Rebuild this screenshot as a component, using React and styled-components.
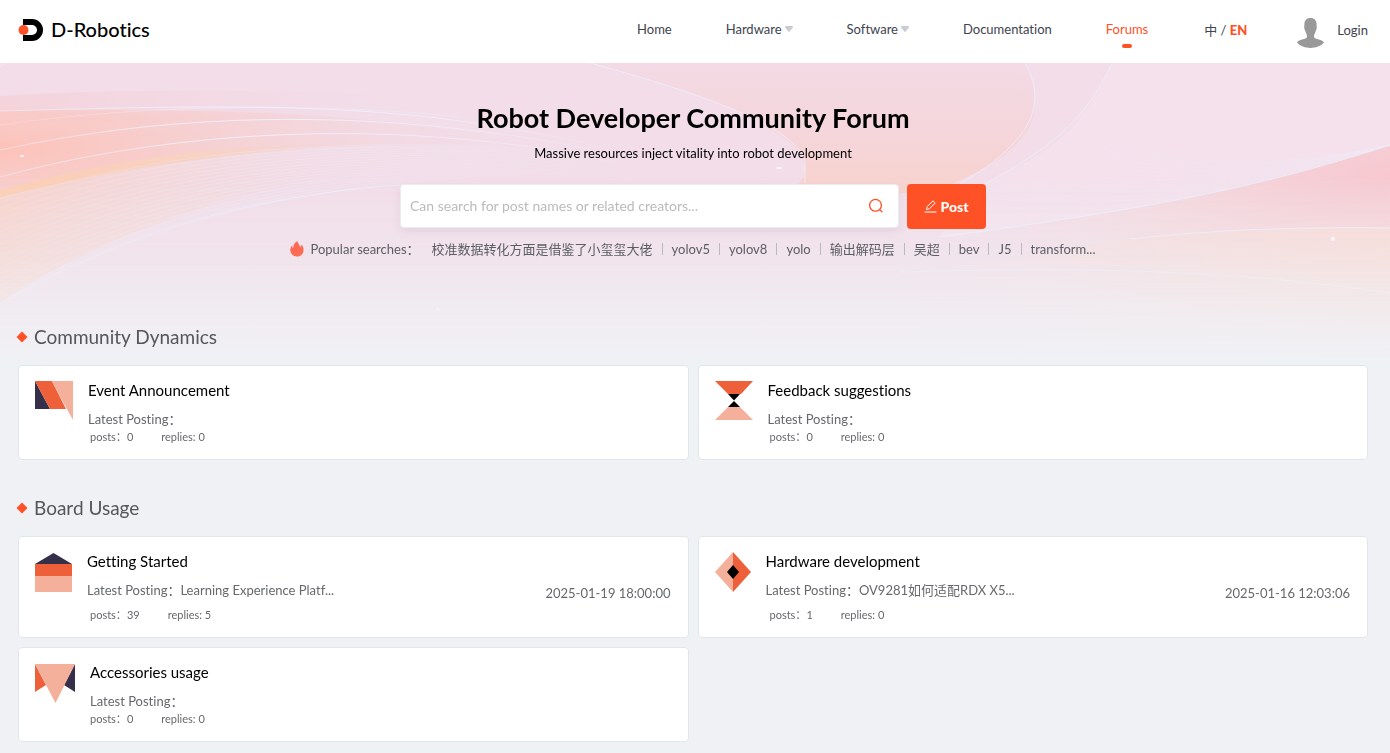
import React from "react";
import styled, { createGlobalStyle } from "styled-components";

const GlobalStyle = createGlobalStyle`
  *, *::before, *::after { box-sizing: border-box; }
  body {
    margin: 0;
    background: #f0f1f5;
    color: #000;
    font-family: Lato, "Noto Sans CJK SC", sans-serif;
    font-size: 13px;
    font-variant-ligatures: none;
  }
  a { color: inherit; text-decoration: none; }
  h1, h2, h3, p, ul { margin: 0; padding: 0; font-weight: 400; }
  ul { list-style: none; }
  button, input { font: inherit; }
`;

const Header = styled.header`
  display: flex;
  align-items: center;
  height: 63px;
  padding: 0 22px 4px 18px;
  background: #fff;
`;

const Brand = styled.a`
  display: flex;
  align-items: center;
  gap: 8px;
  font-size: 20px;
  line-height: 24px;
  font-weight: 500;
  svg { display: block; }
  span { padding-bottom: 2px; }
`;

const Nav = styled.nav`
  display: flex;
  gap: 54px;
  margin-left: auto;
  padding-bottom: 2px;
`;

const NavLink = styled.a`
  position: relative;
  display: flex;
  align-items: center;
  gap: 3px;
  line-height: 20px;
  color: ${(p) => (p.$active ? "#ff5126" : "#40444f")};
  &::after {
    content: "";
    display: ${(p) => (p.$active ? "block" : "none")};
    position: absolute;
    left: calc(50% - 5px);
    bottom: -9px;
    width: 10px;
    height: 4px;
    border-radius: 2px;
    background: #ff5126;
  }
`;

const Language = styled.button`
  margin-left: 56px;
  padding: 0;
  border: 0;
  background: none;
  line-height: 20px;
  color: #40444f;
  cursor: pointer;
  strong { color: #ff5126; font-weight: 900; }
`;

const Login = styled.a`
  display: flex;
  align-items: center;
  gap: 13px;
  margin-left: 50px;
  padding-top: 6px;
  line-height: 20px;
  color: #40444f;
  svg { display: block; }
  span { padding-bottom: 5px; }
`;

const Page = styled.div`
  position: relative;
`;

const Backdrop = styled.svg`
  position: absolute;
  inset: 0 0 auto 0;
  width: 100%;
  height: 297px;
`;

const Content = styled.main`
  position: relative;
  padding: 0 22px 11px 18px;
`;

const Hero = styled.section`
  display: flex;
  flex-direction: column;
  align-items: center;
  padding-top: 37px;
  text-align: center;
`;

const HeroTitle = styled.h1`
  font-size: 27px;
  line-height: 36px;
  font-weight: 700;
`;

const HeroText = styled.p`
  margin-top: 7px;
  line-height: 20px;
`;

const SearchRow = styled.form`
  display: flex;
  align-items: flex-start;
  gap: 8px;
  margin-top: 21px;
`;

const SearchBox = styled.label`
  display: flex;
  align-items: center;
  width: 499px;
  height: 44px;
  padding: 0 12px 0 9px;
  border: 1px solid #ececf0;
  border-radius: 4px;
  background: #fff;
  box-shadow: 0 4px 8px rgba(120, 90, 120, 0.1);
`;

const SearchInput = styled.input`
  flex: 1;
  min-width: 0;
  padding: 0;
  border: 0;
  outline: 0;
  background: none;
  font-size: 14px;
  line-height: 20px;
  &::placeholder { color: #bbb; opacity: 1; }
`;

const IconButton = styled.button`
  display: flex;
  padding: 2px;
  border: 0;
  background: none;
  cursor: pointer;
`;

const PostButton = styled.button`
  display: flex;
  align-items: center;
  justify-content: center;
  gap: 3px;
  width: 79px;
  height: 45px;
  padding: 0;
  border: 0;
  border-radius: 4px;
  background: #ff5126;
  color: #fff;
  font-size: 14px;
  font-weight: 900;
  cursor: pointer;
`;

const Popular = styled.div`
  display: flex;
  align-items: center;
  margin-top: 10px;
  color: #5b5d64;
  line-height: 20px;
  svg { margin-right: 6px; }
`;

const PopularList = styled.ul`
  display: flex;
  margin-left: 12px;
  li { display: flex; align-items: center; }
  li + li::before {
    content: "";
    width: 1px;
    height: 12px;
    margin: 0 9px;
    background: #b9b9c1;
  }
`;

const Section = styled.section`
  margin-top: ${(p) => (p.$first ? 64 : 34)}px;
`;

const SectionTitle = styled.h2`
  display: flex;
  align-items: center;
  gap: 6px;
  margin: 0 0 14px -2px;
  font-size: 19px;
  line-height: 28px;
  color: #55565b;
`;

const CardGrid = styled.div`
  display: grid;
  grid-template-columns: 1fr 1fr;
  gap: 9px;
`;

const Card = styled.article`
  padding: 14px 17px 14px 16px;
  border: 1px solid #e1e6ea;
  border-radius: 4px;
  background: #fff;
`;

const CardTop = styled.div`
  display: flex;
  align-items: flex-start;
  gap: 15px;
  height: 49px;
  svg { flex: none; margin-top: 1px; }
`;

const CardText = styled.div`
  flex: 1;
  min-width: 0;
`;

const CardTitle = styled.h3`
  font-size: 15px;
  line-height: 20px;
`;

const Latest = styled.p`
  margin-top: 9px;
  line-height: 20px;
  color: #66686c;
`;

const PostDate = styled.time`
  margin-top: 32px;
  line-height: 20px;
  color: #66686c;
`;

const Counts = styled.div`
  display: flex;
  gap: 28px;
  margin-top: ${(p) => (p.$spaced ? 7 : 0)}px;
  padding-left: 55px;
  font-size: 11px;
  line-height: 16px;
  color: #66686c;
`;

const Caret = () => (
  <svg width="8" height="6" viewBox="0 0 8 6" aria-hidden="true">
    <path d="M1 0h6a1 1 0 0 1 .8 1.6L4.7 5.5a.9.9 0 0 1-1.4 0L.2 1.6A1 1 0 0 1 1 0z" fill="#c9ccd4" />
  </svg>
);

const Logo = () => (
  <svg width="25" height="24" viewBox="0 0 25 24" aria-hidden="true">
    <path d="M5 1h9a11 11 0 0 1 0 22H5v-6h9a5 5 0 0 0 0-10H5z" fill="#000" />
    <circle cx="5.500" cy="12" r="5" fill="#ff5126" />
  </svg>
);

const Avatar = () => (
  <svg width="27" height="30" viewBox="0 0 27 30" aria-hidden="true">
    <path
      d="M13.500 0C17.500 0 19.600 2.500 19.600 6.500c0 1.200.3 2.200.1 3.600-.2 1.800-.9 2.600-1.500 4.400-.5 1.500-1.200 2.300-1.200 3.600 0 1.400.4 2.200 2.200 2.700 3 .8 7.300 1.900 7.800 3.800-3 3.700-8.500 5.400-13.500 5.400S3 28.300 0 24.600c.5-1.900 4.800-3 7.800-3.800C9.600 20.300 10 19.500 10 18.100c0-1.300-.7-2.100-1.200-3.600-.6-1.800-1.300-2.600-1.500-4.400-.2-1.400.1-2.400.1-3.600C7.400 2.500 9.500 0 13.500 0z"
      fill="#999"
    />
  </svg>
);

const SearchIcon = () => (
  <svg width="16" height="16" viewBox="0 0 16 16" fill="none" stroke="#ff5126" strokeWidth="1.300" strokeLinecap="round" aria-hidden="true">
    <circle cx="7.500" cy="7.300" r="5.900" />
    <path d="M12 12l2 1.800" />
  </svg>
);

const PenIcon = () => (
  <svg width="13" height="13" viewBox="0 0 13 13" fill="none" stroke="#fff" strokeWidth="1" strokeLinejoin="round" aria-hidden="true">
    <path d="M2.500 9.500l.6-2.800L9 .9l2.200 2.100-5.900 5.900z" />
    <path d="M.5 12h12" />
  </svg>
);

const Flame = () => (
  <svg width="14" height="16" viewBox="0 0 14 16" aria-hidden="true">
    <path
      d="M7.200 0c.3 2.200 2.700 3.600 3 6.300.9-.6 1.200-1.600 1.200-2.700C13 5.200 13.700 7.200 13.500 9.400 13.200 13 10.600 15.500 7 15.500S.4 13 .3 9.300C.2 7.400 1 5.700 2 4.500c.1 1.100.4 1.900 1.200 2.400C3.400 4 4.400 1.700 7.200 0z"
      fill="#ff6a52"
    />
  </svg>
);

const Diamond = () => (
  <svg width="12" height="12" viewBox="0 0 12 12" aria-hidden="true">
    <path d="M6 .5L11.500 6 6 11.500.5 6z" fill="#ff5126" />
  </svg>
);

const ORANGE = "#ed6039";
const SALMON = "#f4b09b";
const NAVY = "#352f49";

const TopicIcon = ({ name }) => {
  const icons = {
    event: (
      <svg width="38" height="40" viewBox="0 0 38 40">
        <path d="M0 0v28h15z" fill={NAVY} />
        <path d="M0 0h17l14 28H15z" fill={ORANGE} />
        <path d="M16.500 0H38v39z" fill={SALMON} />
      </svg>
    ),
    feedback: (
      <svg width="38" height="40" viewBox="0 0 38 40">
        <path d="M0 0h38L26 13H13z" fill={ORANGE} />
        <path d="M13 13h12l-6 6.500z" fill="#000" />
        <path d="M19 20l6 6H13z" fill="#000" />
        <path d="M13 26h12l13 13H0z" fill={SALMON} />
      </svg>
    ),
    started: (
      <svg width="37" height="40" viewBox="0 0 37 40">
        <path d="M18.500 1L37 12H0z" fill={NAVY} />
        <path d="M0 12h37v12H0z" fill={ORANGE} />
        <path d="M0 24h37v16H0z" fill={SALMON} />
      </svg>
    ),
    hardware: (
      <svg width="36" height="40" viewBox="0 0 36 40">
        <path d="M18 0v40L0 20z" fill={SALMON} />
        <path d="M18 0v40l18-20z" fill={ORANGE} />
        <path d="M18 13l6 7-6 7-6-7z" fill="#000" />
      </svg>
    ),
    accessories: (
      <svg width="40" height="40" viewBox="0 0 40 40">
        <path d="M0 1v28l11-7z" fill={ORANGE} />
        <path d="M40 1v28l-11-7z" fill={NAVY} />
        <path d="M0 1h40L20.500 40z" fill={SALMON} />
      </svg>
    ),
  };
  return icons[name];
};

const leftStrands = Array.from({ length: 18 }, (_, i) => i);
const rightStrands = Array.from({ length: 14 }, (_, i) => i);

const HeroBackdrop = () => (
  <Backdrop viewBox="0 0 1390 297" preserveAspectRatio="none" aria-hidden="true">
    <defs>
      <radialGradient id="glowLeft" gradientUnits="userSpaceOnUse" cx="0" cy="0" r="1" gradientTransform="translate(0 85) scale(520 130)">
        <stop offset="0" stopColor="#fdc2b8" />
        <stop offset="0.35" stopColor="#f8cac6" stopOpacity="0.75" />
        <stop offset="1" stopColor="#f3d3d9" stopOpacity="0" />
      </radialGradient>
      <linearGradient id="blush" x1="0" x2="1">
        <stop offset="0" stopColor="#f5ccd3" stopOpacity="0.6" />
        <stop offset="1" stopColor="#f3d8e2" stopOpacity="0" />
      </linearGradient>
      <linearGradient id="amber" gradientUnits="userSpaceOnUse" x1="0" y1="0" x2="460" y2="0">
        <stop offset="0" stopColor="#fcceb4" />
        <stop offset="0.45" stopColor="#f8d2c3" />
        <stop offset="0.85" stopColor="#f5d5d5" stopOpacity="0" />
      </linearGradient>
      <linearGradient id="warmFan" gradientUnits="userSpaceOnUse" x1="0" y1="0" x2="460" y2="80">
        <stop offset="0" stopColor="#f9cfc2" stopOpacity="0.85" />
        <stop offset="1" stopColor="#f2dde6" stopOpacity="0" />
      </linearGradient>
      <linearGradient id="strand" gradientUnits="userSpaceOnUse" x1="0" y1="0" x2="660" y2="0">
        <stop offset="0" stopColor="#eef0fd" stopOpacity="0.5" />
        <stop offset="0.4" stopColor="#edf0ff" />
        <stop offset="0.7" stopColor="#eef0fd" stopOpacity="0.7" />
        <stop offset="1" stopColor="#eef0fd" stopOpacity="0" />
      </linearGradient>
      <linearGradient id="peach" x1="0" y1="0" x2="0" y2="1">
        <stop offset="0" stopColor="#f3dae4" />
        <stop offset="0.5" stopColor="#f5d6dc" />
        <stop offset="1" stopColor="#f8d2cd" />
      </linearGradient>
      <radialGradient id="glowRight" gradientUnits="userSpaceOnUse" cx="0" cy="0" r="1" gradientTransform="translate(1390 110) scale(460 170)">
        <stop offset="0" stopColor="#f7c8d0" />
        <stop offset="0.5" stopColor="#f5d6da" stopOpacity="0.8" />
        <stop offset="1" stopColor="#f4dde2" stopOpacity="0" />
      </radialGradient>
      <linearGradient id="warmRight" gradientUnits="userSpaceOnUse" x1="900" y1="0" x2="1390" y2="0">
        <stop offset="0" stopColor="#f7ddd8" stopOpacity="0" />
        <stop offset="1" stopColor="#f9dad2" stopOpacity="0.8" />
      </linearGradient>
      <linearGradient id="fade" x1="0" y1="0" x2="0" y2="1">
        <stop offset="0.38" stopColor="#f0f1f5" stopOpacity="0" />
        <stop offset="0.65" stopColor="#f0f1f5" stopOpacity="0.35" />
        <stop offset="0.85" stopColor="#f0f1f5" stopOpacity="0.75" />
        <stop offset="1" stopColor="#f0f1f5" />
      </linearGradient>
    </defs>
    <rect width="1390" height="297" fill="#f2dde8" />
    <path d="M0 33C120 26 280 26 420 34V60H0z" fill="url(#blush)" />
    <path d="M0 48C220 44 420 50 560 90C360 70 160 90 0 133z" fill="url(#glowLeft)" />
    <path d="M0 136C200 80 330 80 560 90C330 96 130 150 0 240z" fill="url(#warmFan)" />
    <path d="M0 127C110 98 210 80 400 80C230 88 120 104 0 135z" fill="url(#amber)" />
    <path d="M590 0C720 35 800 70 805 102C806 116 800 122 785 130H930C1010 100 1036 70 1035 38C1035 20 1030 8 1025 0z" fill="url(#peach)" />
    <path d="M1112 0C1075 80 1040 95 960 130L940 174C1130 150 1240 128 1390 82V0z" fill="#f4e1ed" opacity="0.75" />
    <path d="M1390 82C1240 130 1130 150 900 180V297H1390z" fill="url(#glowRight)" />
    <path d="M1390 165C1220 162 1130 174 900 210V297H1390z" fill="url(#warmRight)" />
    <g fill="none" stroke="url(#strand)" strokeWidth="0.5" opacity="0.7">
      {leftStrands.map((i) => (
        <path key={i} d={`M0 ${139 + i * 6}C${120 + i} ${98 + i * 4} 270 ${79 + i * 3} 440 ${82 + i * 2}S600 ${100 + i} 660 ${118 + i}`} />
      ))}
    </g>
    <g fill="none" stroke="#eef0fd" strokeWidth="0.5" opacity="0.4">
      {rightStrands.map((i) => (
        <path key={i} d={`M${1082 - i * 9} ${50 + i * 7}C${1100 + i * 3} ${90 + i * 5} 1220 ${118 + i} 1390 82`} />
      ))}
    </g>
    <g fill="none" stroke="url(#strand)" strokeWidth="1">
      <path d="M0 48C150 44 320 38 460 58S600 86 660 104" />
      <path d="M0 62C150 40 330 40 460 54" opacity="0.5" />
      <path d="M0 87C160 52 320 50 460 66S600 92 660 108" />
      <path d="M0 114C160 70 330 64 460 76S600 98 660 112" />
      <path d="M0 240C130 166 260 132 400 122" opacity="0.8" />
    </g>
    <g fill="none" stroke="#edf0ff" strokeWidth="1" opacity="0.8">
      <path d="M0 3L6 0" />
      <path d="M470 4C580 30 660 52 700 70" opacity="0.3" />
      <path d="M590 0C720 35 805 70 805 102V120" />
      <path d="M1025 0C1045 36 1040 74 960 121" />
      <path d="M1112 0C1084 60 1050 85 985 121" />
      <path d="M940 174C1130 148 1250 128 1390 82" />
      <path d="M1130 176C1220 166 1300 164 1390 165" />
      <path d="M900 209C1080 204 1230 206 1390 230" opacity="0.8" />
    </g>
    <rect width="1390" height="297" fill="url(#fade)" />
    <g fill="#f5f7ff">
      <ellipse cx="22" cy="93" rx="2" ry="1" />
      <ellipse cx="779" cy="105" rx="3" ry="1" />
      <ellipse cx="1333" cy="176" rx="2" ry="2" />
      <circle cx="438" cy="246" r="1" />
    </g>
  </Backdrop>
);

const navItems = [
  { label: "Home" },
  { label: "Hardware", menu: true },
  { label: "Software", menu: true },
  { label: "Documentation" },
  { label: "Forums", active: true },
];

const searches = ["校准数据转化方面是借鉴了小玺玺大佬", "yolov5", "yolov8", "yolo", "输出解码层", "吴超", "bev", "J5", "transform..."];

const sections = [
  {
    title: "Community Dynamics",
    topics: [
      { icon: "event", title: "Event Announcement", posts: 0, replies: 0 },
      { icon: "feedback", title: "Feedback suggestions", posts: 0, replies: 0 },
    ],
  },
  {
    title: "Board Usage",
    topics: [
      { icon: "started", title: "Getting Started", latest: "Learning Experience Platf...", date: "2025-01-19 18:00:00", posts: 39, replies: 5 },
      { icon: "hardware", title: "Hardware development", latest: "OV9281如何适配RDX X5...", date: "2025-01-16 12:03:06", posts: 1, replies: 0 },
      { icon: "accessories", title: "Accessories usage", posts: 0, replies: 0 },
    ],
  },
];

const TopicCard = ({ topic }) => (
  <Card>
    <CardTop>
      <TopicIcon name={topic.icon} />
      <CardText>
        <CardTitle><a href="#topic">{topic.title}</a></CardTitle>
        <Latest>Latest Posting：{topic.latest}</Latest>
      </CardText>
      {topic.date && <PostDate>{topic.date}</PostDate>}
    </CardTop>
    <Counts $spaced={Boolean(topic.date)}>
      <span>posts：{topic.posts}</span>
      <span>replies: {topic.replies}</span>
    </Counts>
  </Card>
);

export default function App() {
  return (
    <>
      <GlobalStyle />
      <Header>
        <Brand href="#home"><Logo /><span>D-Robotics</span></Brand>
        <Nav>
          {navItems.map((item) => (
            <NavLink key={item.label} href={`#${item.label.toLowerCase()}`} $active={item.active}>
              {item.label}
              {item.menu && <Caret />}
            </NavLink>
          ))}
        </Nav>
        <Language type="button">中 / <strong>EN</strong></Language>
        <Login href="#login"><Avatar /><span>Login</span></Login>
      </Header>
      <Page>
        <HeroBackdrop />
        <Content>
          <Hero>
            <HeroTitle>Robot Developer Community Forum</HeroTitle>
            <HeroText>Massive resources inject vitality into robot development</HeroText>
            <SearchRow onSubmit={(e) => e.preventDefault()}>
              <SearchBox>
                <SearchInput type="text" aria-label="Search posts" placeholder="Can search for post names or related creators..." />
                <IconButton type="submit" aria-label="Search"><SearchIcon /></IconButton>
              </SearchBox>
              <PostButton type="button"><PenIcon />Post</PostButton>
            </SearchRow>
            <Popular>
              <Flame />
              <span>Popular searches：</span>
              <PopularList>
                {searches.map((s) => (
                  <li key={s}><a href="#search">{s}</a></li>
                ))}
              </PopularList>
            </Popular>
          </Hero>
          {sections.map((section, i) => (
            <Section key={section.title} $first={i === 0}>
              <SectionTitle><Diamond />{section.title}</SectionTitle>
              <CardGrid>
                {section.topics.map((t) => <TopicCard key={t.title} topic={t} />)}
              </CardGrid>
            </Section>
          ))}
        </Content>
      </Page>
    </>
  );
}
